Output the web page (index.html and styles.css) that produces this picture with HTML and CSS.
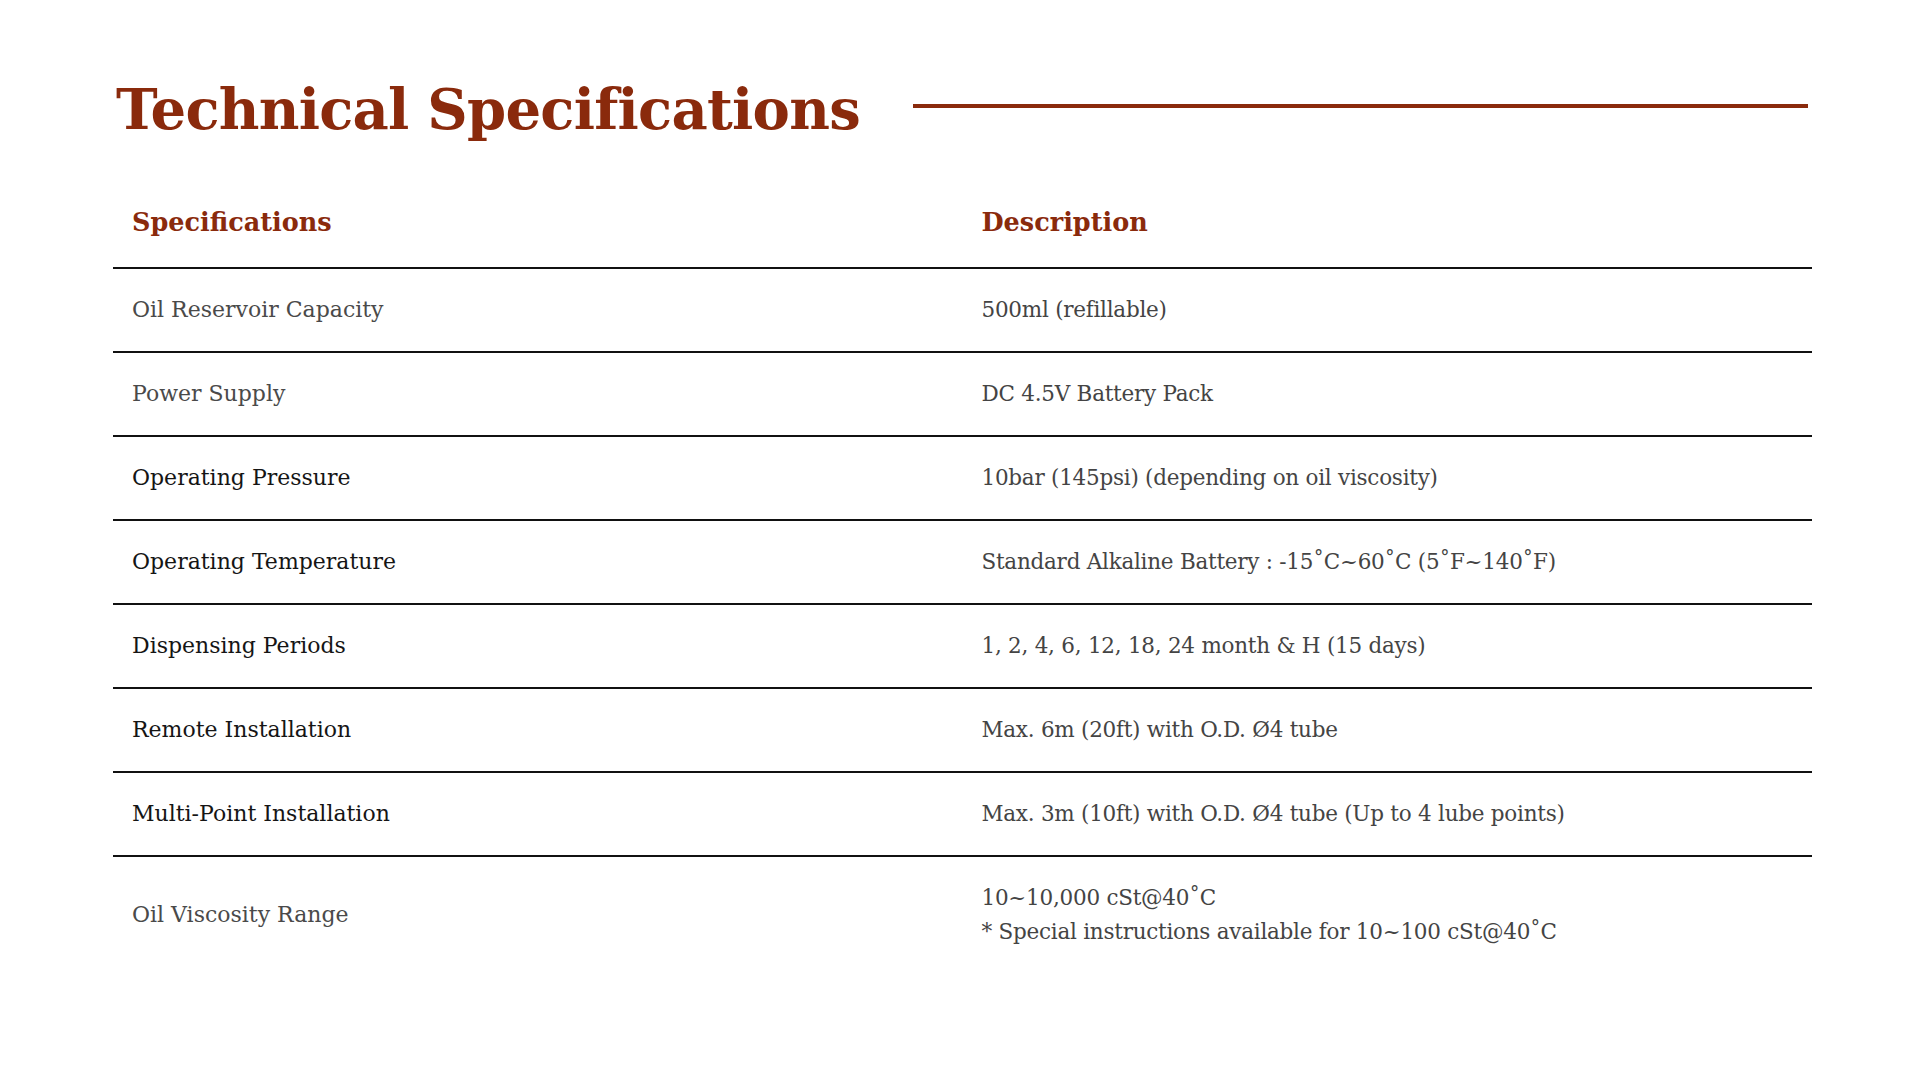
FILE: index.html
```html
<!DOCTYPE html>
<html lang="en">
<head>
<meta charset="utf-8">
<title>Technical Specifications</title>
<link rel="stylesheet" href="styles.css">
</head>
<body>
<main class="page">
  <header class="title-row">
    <h1 class="title">Technical Specifications</h1>
    <div class="title-rule"></div>
  </header>
  <table class="spec-table">
    <thead>
      <tr>
        <th>Specifications</th>
        <th>Description</th>
      </tr>
    </thead>
    <tbody>
      <tr class="muted">
        <td>Oil Reservoir Capacity</td>
        <td>500ml (refillable)</td>
      </tr>
      <tr class="muted">
        <td>Power Supply</td>
        <td>DC 4.5V Battery Pack</td>
      </tr>
      <tr>
        <td>Operating Pressure</td>
        <td>10bar (145psi) (depending on oil viscosity)</td>
      </tr>
      <tr>
        <td>Operating Temperature</td>
        <td>Standard Alkaline Battery : -15˚C~60˚C (5˚F~140˚F)</td>
      </tr>
      <tr>
        <td>Dispensing Periods</td>
        <td>1, 2, 4, 6, 12, 18, 24 month &amp; H (15 days)</td>
      </tr>
      <tr>
        <td>Remote Installation</td>
        <td>Max. 6m (20ft) with O.D. Ø4 tube</td>
      </tr>
      <tr>
        <td>Multi-Point Installation</td>
        <td>Max. 3m (10ft) with O.D. Ø4 tube (Up to 4 lube points)</td>
      </tr>
      <tr class="muted last">
        <td>Oil Viscosity Range</td>
        <td>10~10,000 cSt@40˚C<br>* Special instructions available for 10~100 cSt@40˚C</td>
      </tr>
    </tbody>
  </table>
</main>
</body>
</html>
```
FILE: styles.css
```css
* { box-sizing: border-box; }
html, body {
  margin: 0;
  padding: 0;
  background: #ffffff;
}
body {
  font-family: "DejaVu Serif", "Liberation Serif", serif;
  color: #444444;
}
.page {
  width: 1699px;
  margin-left: 113px;
  padding-top: 72px;
}
.title-row {
  display: flex;
  align-items: center;
  margin-bottom: 34px;
}
.title {
  margin: 0 0 0 3px;
  font-size: 56px;
  line-height: 74px;
  font-weight: bold;
  letter-spacing: -0.75px;
  color: #8a2a0c;
  white-space: nowrap;
}
.title-rule {
  flex: 1;
  height: 4px;
  background: #8a2a0c;
  margin-left: 53px;
  margin-right: 4px;
  margin-top: -6px;
}
.spec-table {
  width: 100%;
  border-collapse: collapse;
  table-layout: fixed;
}
.spec-table th {
  text-align: left;
  font-size: 25.5px;
  line-height: 39px;
  font-weight: bold;
  color: #8a2a0c;
  padding: 23px 19px 25px;
  border-bottom: 2px solid #111111;
}
.spec-table td {
  font-size: 22px;
  line-height: 34px;
  padding: 24px 19px;
  color: #444444;
  border-bottom: 2px solid #111111;
  vertical-align: middle;
}
.spec-table td + td {
  font-size: 21.5px;
  letter-spacing: -0.25px;
}
.spec-table td:first-child {
  color: #151515;
}
.spec-table tr.muted td:first-child {
  color: #4a4a4a;
}
.spec-table tr.last td {
  border-bottom: none;
}
```
